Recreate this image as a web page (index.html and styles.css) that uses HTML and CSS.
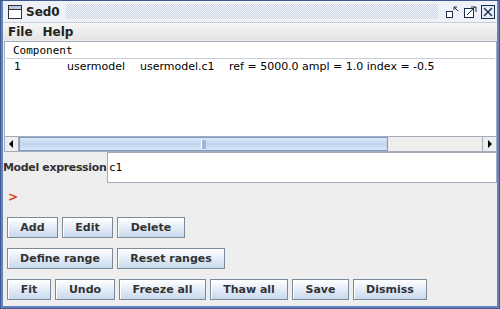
FILE: index.html
```html
<!DOCTYPE html>
<html>
<head>
<meta charset="utf-8">
<link rel="stylesheet" href="styles.css">
</head>
<body>
<div class="frame">
  <div class="titlebar">
    <svg class="appicon" width="14" height="14" viewBox="0 0 14 14"><rect x="0.5" y="0.5" width="13" height="13" fill="#fff" stroke="#333"/><rect x="1" y="1" width="12" height="3" fill="#b8c8e0"/><line x1="0.5" y1="4.5" x2="13.5" y2="4.5" stroke="#333"/></svg>
    <span class="title">Sed0</span>
    <div class="bumps"></div>
    <div class="tbtns">
      <svg width="16" height="16" viewBox="0 0 16 16"><rect x="2.5" y="7.5" width="6" height="6" fill="#fff" stroke="#1c2c4c"/><path d="M10 3 L13 3 M10 3 L10 6 M10 3 L14 7" stroke="#1c2c4c" fill="none"/></svg>
      <svg width="16" height="16" viewBox="0 0 16 16"><rect x="2.5" y="4.5" width="9" height="9" fill="#fff" stroke="#1c2c4c"/><path d="M9 3 L14 3 L14 8 M5 11 L13 3" stroke="#1c2c4c" fill="none"/></svg>
      <svg width="16" height="16" viewBox="0 0 16 16"><rect x="1.5" y="1.5" width="13" height="13" fill="#e6ecf5" stroke="#1c2c4c"/><path d="M4 4 L12 12 M12 4 L4 12" stroke="#1c2c4c" stroke-width="1.4"/></svg>
    </div>
  </div>
  <div class="menubar"><span>File</span><span>Help</span></div>
  <div class="body">
    <div class="table">
      <div class="thead">Component</div>
      <div class="trow"><span class="c1">1</span><span class="c2">usermodel</span><span class="c3">usermodel.c1</span><span class="c4">ref = 5000.0 ampl = 1.0 index = -0.5</span></div>
      <div class="tfill"></div>
      <div class="hscroll">
        <div class="arrow"><svg width="6" height="8" viewBox="0 0 6 8"><path d="M4 0 L0 4 L4 8 Z" fill="#000"/></svg></div>
        <div class="track">
          <div class="thumb"><span class="grip"></span></div>
        </div>
        <div class="arrow"><svg width="6" height="8" viewBox="0 0 6 8"><path d="M1 0 L5 4 L1 8 Z" fill="#000"/></svg></div>
      </div>
    </div>
    <div class="exprrow">
      <span class="exprlabel">Model expression</span>
      <div class="exprfield">c1</div>
    </div>
    <div class="prompt">&gt;</div>
    <div class="buttons">
      <div class="btnrow"><button class="btn w-add">Add</button><button class="btn w-edit">Edit</button><button class="btn w-del">Delete</button></div>
      <div class="btnrow"><button class="btn w-def">Define range</button><button class="btn w-reset">Reset ranges</button></div>
      <div class="btnrow"><button class="btn w-fit">Fit</button><button class="btn w-undo">Undo</button><button class="btn w-freeze">Freeze all</button><button class="btn w-thaw">Thaw all</button><button class="btn w-save">Save</button><button class="btn w-dismiss">Dismiss</button></div>
    </div>
  </div>
</div>
</body>
</html>
```
FILE: styles.css
```css
html, body { margin: 0; padding: 0; }
body { width: 500px; height: 309px; overflow: hidden; font-family: "DejaVu Sans", sans-serif; font-size: 11px; font-weight: bold; color: #333; }
.frame { box-sizing: border-box; width: 500px; height: 309px; border: 3px solid #6382be; border-top: 1px solid #6382be; outline: 1px solid #3e5a8e; outline-offset: -1px; background: #eeeeee; display: flex; flex-direction: column; }
.titlebar { height: 21px; display: flex; align-items: center; padding-left: 5px; background: #eef2f8; }
.appicon { flex: none; }
.title { margin-left: 4px; font-size: 12px; color: #222; }
.bumps { flex: 1; height: 15px; margin: 0 6px 0 6px; background-color: #f2f5fa; background-image: conic-gradient(#c9d3e3 25%, transparent 0 50%, #c9d3e3 0 75%, transparent 0); background-size: 2px 2px; }
.tbtns { display: flex; gap: 2px; padding-right: 1px; }
.menubar { height: 17px; display: flex; align-items: center; gap: 10px; padding-left: 5px; background: linear-gradient(#f6f6f6, #e4e4e4); border-top: 1px solid #c8cfdb; color: #222; font-size: 12px; }
.body { flex: 1; display: flex; flex-direction: column; padding: 1px 0 0 0; }
.table { margin: 0 0 0 1px; height: 109px; border: 1px solid #a3acb8; background: #fff; display: flex; flex-direction: column; }
.thead { height: 15px; line-height: 15px; padding-left: 7px; border-bottom: 1px solid #c9ced6; font-family: "DejaVu Sans Mono", monospace; font-weight: normal; color: #000; font-size: 11px; margin: 1px 1px 0 1px; }
.trow { height: 15px; line-height: 15px; display: flex; font-weight: normal; color: #000; font-size: 11px; white-space: nowrap; }
.c1 { box-sizing: border-box; width: 62px; padding-left: 9px; }
.c2 { width: 73px; }
.c3 { width: 89px; }
.tfill { flex: 1; }
.hscroll { height: 14px; display: flex; border-top: 1px solid #a3acb8; background: #eeeeee; }
.arrow { width: 13px; display: flex; align-items: center; justify-content: center; background: #eeeeee; border-left: 1px solid #a3acb8; border-right: 1px solid #a3acb8; }
.arrow:first-child { border-left: none; }
.arrow:last-child { border-right: none; }
.track { flex: 1; display: flex; }
.thumb { width: 369px; border: 1px solid #7a9acb; box-sizing: border-box; background: linear-gradient(#dde8f6, #c3d5ee 50%, #d8e4f4); display: flex; justify-content: center; align-items: center; }
.grip { width: 4px; height: 9px; background: #9fb6d8; border-left: 1px solid #fff; }
.exprrow { display: flex; align-items: center; height: 31px; }
.exprlabel { flex: none; width: 104px; color: #333; font-size: 11px; letter-spacing: -0.35px; white-space: nowrap; }
.exprfield { flex: 1; box-sizing: border-box; height: 31px; border: 1px solid #a3acb8; background: #fff; font-family: "DejaVu Sans Mono", monospace; font-weight: normal; font-size: 11px; color: #000; display: flex; align-items: center; padding-left: 1px; }
.prompt { color: #d04818; font-size: 12px; padding-left: 5px; height: 29px; line-height: 29px; }
.buttons { display: flex; flex-direction: column; gap: 10px; padding-left: 4px; margin-top: 5px; }
.btnrow { display: flex; gap: 4px; height: 21px; }
.btn { display: block; box-sizing: border-box; font-family: "DejaVu Sans", sans-serif; font-weight: bold; font-size: 11px; color: #333; height: 21px; padding: 0; border: 1px solid #7a8a99; background: linear-gradient(#ffffff, #e6eef8 45%, #c8d8ec); box-shadow: inset 1px 1px 0 #fff; }
.w-add { width: 51px; } .w-edit { width: 51px; } .w-del { width: 68px; }
.w-def { width: 106px; } .w-reset { width: 108px; }
.w-fit { width: 44px; } .w-undo { width: 60px; } .w-freeze { width: 87px; } .w-thaw { width: 78px; } .w-save { width: 57px; } .w-dismiss { width: 74px; }
```
